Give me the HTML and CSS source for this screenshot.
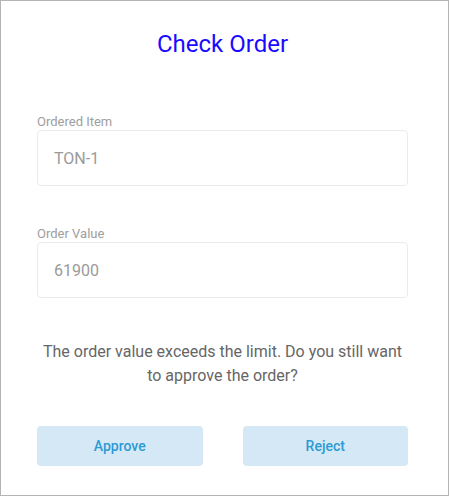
FILE: index.html
```html
<!DOCTYPE html>
<html>
<head>
<meta charset="utf-8">
<link rel="stylesheet" href="styles.css">
</head>
<body>
<div class="dialog">
  <h1 class="title">Check Order</h1>
  <div class="field field-first">
    <div class="label">Ordered Item</div>
    <div class="input">TON-1</div>
  </div>
  <div class="field">
    <div class="label">Order Value</div>
    <div class="input">61900</div>
  </div>
  <p class="message">The order value exceeds the limit. Do you still want to approve the order?</p>
  <div class="actions">
    <button class="btn">Approve</button>
    <button class="btn">Reject</button>
  </div>
</div>
</body>
</html>
```
FILE: styles.css
```css
html, body {
  margin: 0;
  padding: 0;
  background: #ffffff;
}
body {
  font-family: Roboto, "Liberation Sans", sans-serif;
}
.dialog {
  box-sizing: border-box;
  width: 449px;
  height: 496px;
  border: 1px solid #b4b4b4;
  padding: 0 40px 0 36px;
  display: flex;
  flex-direction: column;
}
.title {
  margin: 29px 0 0;
  font-size: 24px;
  font-weight: 400;
  line-height: 28px;
  text-align: center;
  color: #1a0aff;
}
.field {
  display: flex;
  flex-direction: column;
  margin-top: 40px;
}
.field-first {
  margin-top: 56px;
}
.label {
  font-size: 13px;
  line-height: 15px;
  color: #9e9e9e;
  margin-bottom: 1px;
}
.input {
  box-sizing: border-box;
  height: 56px;
  border: 1px solid #ebebeb;
  border-radius: 4px;
  padding: 0 16px;
  display: flex;
  align-items: center;
  font-size: 16px;
  color: #9a9a9a;
}
.message {
  margin: 42px 0 0;
  font-size: 16px;
  line-height: 24px;
  color: #666666;
  text-align: center;
}
.actions {
  display: flex;
  gap: 40px;
  margin-top: 38px;
}
.btn {
  flex: 1;
  height: 40px;
  border: none;
  border-radius: 4px;
  background: #d4e9f5;
  color: #2d9ad4;
  font-family: Roboto, "Liberation Sans", sans-serif;
  font-size: 14px;
  font-weight: 500;
}
```
